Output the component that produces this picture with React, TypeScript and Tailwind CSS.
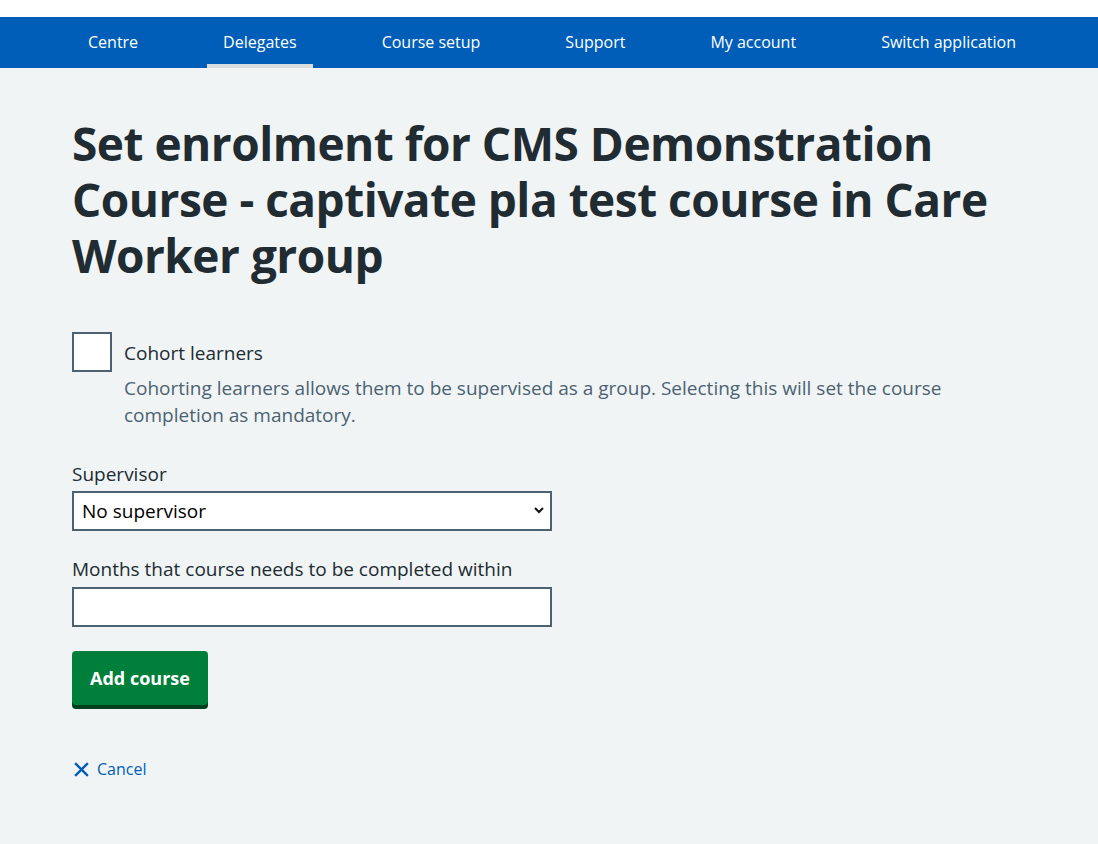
import React from "react";

const navItems = ["Centre", "Delegates", "Course setup", "Support", "My account", "Switch application"];

export default function App() {
  return (
    <div className="min-h-[844px] bg-[#f0f4f5] text-[#212b32]" style={{ fontFamily: '"Open Sans", "Noto Sans", Arial, sans-serif' }}>
      <div className="h-[17px] bg-white" />
      <nav className="h-[51px] bg-[#005eb8]">
        <ul className="ml-[72px] flex h-full w-[960px] justify-between">
          {navItems.map((item) => (
            <li
              key={item}
              className={
                "flex h-full items-center px-4 text-[16px] text-white " +
                (item === "Delegates" ? "border-b-4 border-[#d8dde0] pt-[2px]" : "pb-[2px]")
              }
            >
              {item}
            </li>
          ))}
        </ul>
      </nav>
      <main className="ml-[72px] w-[960px] pt-[47px]">
        <h1 className="text-[46px] font-bold leading-[56px] tracking-[-0.5px]">
          Set enrolment for CMS Demonstration
          <br />
          Course - captivate pla test course in Care
          <br />
          Worker group
        </h1>
        <div className="mt-[49px] flex gap-3">
          <div className="h-10 w-10 shrink-0 border-2 border-[#4c6272] bg-white" />
          <div className="pt-[9px]">
            <div className="text-[19px] leading-[24px]">Cohort learners</div>
            <div className="mt-[10px] text-[19px] leading-[27px] text-[#4c6272]">
              Cohorting learners allows them to be supervised as a group. Selecting this will set the course
              <br />
              completion as mandatory.
            </div>
          </div>
        </div>
        <div className="mt-[31px]">
          <label className="block text-[19px] leading-[28px]">Supervisor</label>
          <div className="relative mt-[3px] flex h-10 w-[480px] items-center border-2 border-[#4c6272] bg-white pl-[8px] text-[19px] text-black">
            No supervisor
            <svg className="absolute right-[6px] top-[13px]" width="10" height="8" viewBox="0 0 10 8">
              <path d="M1 2 L5 6 L9 2" stroke="#111" strokeWidth="2" fill="none" />
            </svg>
          </div>
        </div>
        <div className="mt-[24px]">
          <label className="block text-[19px] leading-[28px]">Months that course needs to be completed within</label>
          <div className="mt-[4px] h-10 w-[480px] border-2 border-[#4c6272] bg-white" />
        </div>
        <div className="mt-[24px]">
          <button className="h-[54px] w-[136px] rounded-[4px] bg-[#007f3b] text-[18px] font-bold text-white shadow-[0_4px_0_#00401e]">
            Add course
          </button>
        </div>
        <a className="mt-[52px] flex items-center gap-[7px] text-[16px] text-[#005eb8]">
          <svg width="17" height="17" viewBox="0 0 16 16" className="ml-[1px]">
            <path d="M2 2 L14 14 M14 2 L2 14" stroke="#005eb8" strokeWidth="2.2" fill="none" />
          </svg>
          Cancel
        </a>
      </main>
    </div>
  );
}
